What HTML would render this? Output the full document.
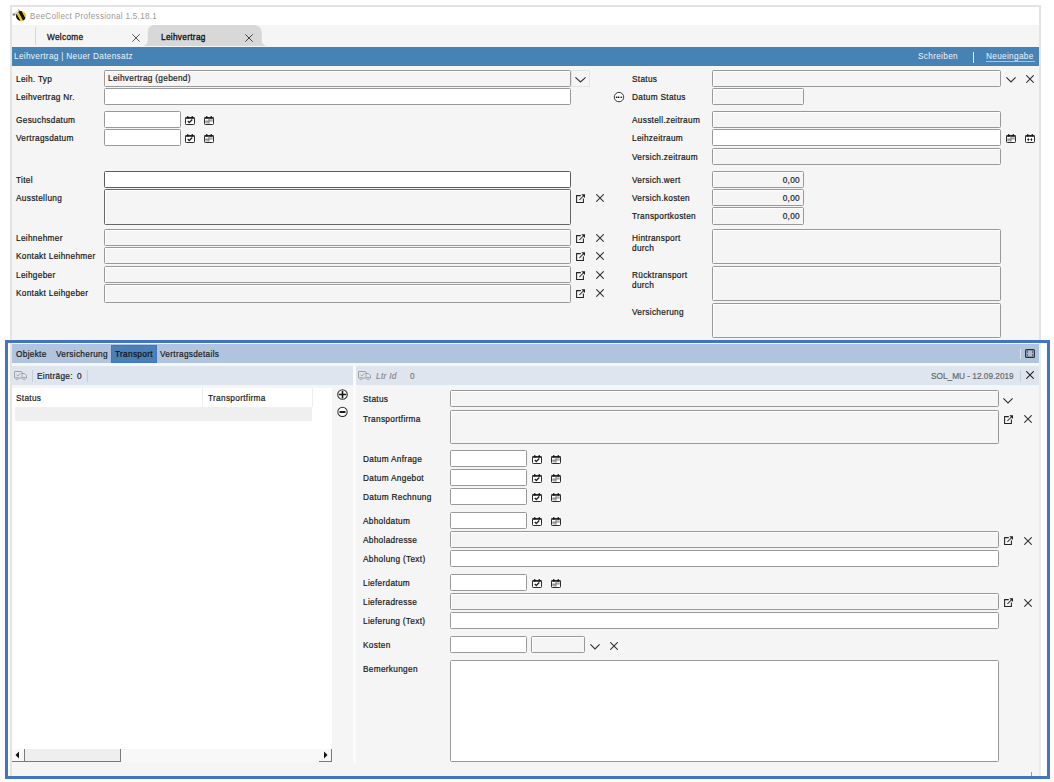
<!DOCTYPE html><html><head><meta charset="utf-8"><title>BeeCollect</title><style>
html,body{margin:0;padding:0;width:1054px;height:782px;overflow:hidden;background:#fff;position:relative;font-family:"Liberation Sans",sans-serif;}
body>div{position:absolute;box-sizing:content-box;}
.t{position:absolute;white-space:nowrap;line-height:1.15;color:#161616;font-family:"Liberation Sans",sans-serif;letter-spacing:0.35px;-webkit-text-stroke:0.22px currentColor;transform:scaleX(0.87);transform-origin:0 0;}
</style></head><body>
<div style="left:10px;top:5px;width:1031px;height:772px;background:#e3e3e3;"></div>
<div style="left:12px;top:7px;width:1027px;height:18px;background:#fff;"></div>
<div style="left:12px;top:25px;width:1027px;height:22px;background:#f5f5f5;"></div>
<div style="left:12px;top:47px;width:1027px;height:19px;background:#4682b4;"></div>
<div style="left:12px;top:66px;width:1027px;height:710px;background:#f5f5f5;"></div>
<svg style="position:absolute;left:11px;top:6px;" width="20" height="18" viewBox="0 0 20 18"><defs><clipPath id="bc"><circle cx="10" cy="10" r="5"/></clipPath></defs><ellipse cx="3" cy="8.5" rx="1.6" ry="1.3" fill="#888"/><path d="M4 7Q6 5.5 8 6" stroke="#bbb" stroke-width="0.8" fill="none"/><path d="M7.5 3.5L9 6" stroke="#555" stroke-width="0.9"/><g clip-path="url(#bc)" transform="rotate(-28 10 10)"><rect x="4" y="3" width="3.4" height="14" fill="#111"/><rect x="7.4" y="3" width="2.2" height="14" fill="#f4c300"/><rect x="9.6" y="3" width="3.4" height="14" fill="#111"/><rect x="13" y="3" width="4" height="14" fill="#f4c300"/></g></svg>
<div class="t" style="left:30px;top:11px;font-size:9.3px;color:#999;-webkit-text-stroke:0;">BeeCollect Professional 1.5.18.1</div>
<div style="left:35px;top:27px;width:1px;height:18px;background:#d6d6d6;"></div>
<div class="t" style="left:47px;top:32px;font-size:9.5px;color:#222;-webkit-text-stroke:0.35px #222;">Welcome</div>
<svg style="position:absolute;left:132px;top:34px;" width="8" height="8" viewBox="0 0 8 8"><path d="M0.3 0.3L7.7 7.7M7.7 0.3L0.3 7.7" stroke="#555" stroke-width="1.0" fill="none"/></svg>
<svg style="position:absolute;left:141px;top:25px;" width="128" height="21" viewBox="0 0 128 21"><path d="M0 21C4 21 6.8 19 6.8 15V8C6.8 3 9 0 13.5 0H112C117 0 120.8 3 120.8 8V15C120.8 19 123.5 21 128 21Z" fill="#d8d8d8"/></svg>
<div class="t" style="left:161px;top:32px;font-size:9.5px;color:#111;-webkit-text-stroke:0.35px #111;">Leihvertrag</div>
<svg style="position:absolute;left:245px;top:34px;" width="8" height="8" viewBox="0 0 8 8"><path d="M0.3 0.3L7.7 7.7M7.7 0.3L0.3 7.7" stroke="#444" stroke-width="1.0" fill="none"/></svg>
<div class="t" style="left:14px;top:51px;font-size:9.5px;color:#eef4fa;-webkit-text-stroke:0;">Leihvertrag | Neuer Datensatz</div>
<div class="t" style="left:918px;top:51px;font-size:9.5px;color:#eef4fa;-webkit-text-stroke:0;">Schreiben</div>
<div style="left:973px;top:52px;width:1px;height:11px;background:#e6eef6;"></div>
<div class="t" style="left:986px;top:51px;font-size:9.5px;color:#eef4fa;-webkit-text-stroke:0;">Neueingabe</div>
<div style="left:986px;top:61px;width:49px;height:1px;background:#a9c3df;"></div>
<div class="t" style="left:16px;top:74px;font-size:9.5px;">Leih. Typ</div>
<div style="left:104px;top:70px;width:465px;height:15px;border:1px solid #999;border-radius:1.5px;background:#f5f5f5;box-shadow:inset 1px 1px 0 #fff;"></div>
<div class="t" style="left:108px;top:73px;font-size:9.5px;color:#1b1b1b;">Leihvertrag (gebend)</div>
<div style="left:571px;top:70px;width:17px;height:15px;border:1px solid #e4e4e4;"></div>
<svg style="position:absolute;left:575px;top:77px;" width="11" height="6" viewBox="0 0 11 6"><path d="M0.4 0.4L5.5 5L10.6 0.4" stroke="#333" stroke-width="1.15" fill="none"/></svg>
<div class="t" style="left:16px;top:92px;font-size:9.5px;">Leihvertrag Nr.</div>
<div style="left:104px;top:88px;width:465px;height:15px;border:1px solid #999;border-radius:1.5px;background:#fff;box-shadow:inset 1px 1px 0 #fff;"></div>
<div class="t" style="left:16px;top:115px;font-size:9.5px;">Gesuchsdatum</div>
<div style="left:104px;top:111px;width:75px;height:15px;border:1px solid #999;border-radius:1.5px;background:#fff;box-shadow:inset 1px 1px 0 #fff;"></div>
<svg style="position:absolute;left:185px;top:116px;" width="10" height="9" viewBox="0 0 10 9"><rect x="0.5" y="1.5" width="9" height="7" rx="0.8" fill="#fff" stroke="#2a2a2a" stroke-width="1"/><rect x="0.5" y="1.2" width="9" height="1.6" fill="#2a2a2a"/><rect x="2.1" y="0" width="1.3" height="2.6" rx="0.5" fill="#111"/><rect x="6.6" y="0" width="1.3" height="2.6" rx="0.5" fill="#111"/><path d="M2.7 5.1L4.3 6.5L7.3 3.6" stroke="#222" stroke-width="1.35" fill="none"/></svg>
<svg style="position:absolute;left:204px;top:116px;" width="10" height="9" viewBox="0 0 10 9"><rect x="0.5" y="1.5" width="9" height="7" rx="0.8" fill="#fff" stroke="#2a2a2a" stroke-width="1"/><rect x="0.5" y="1.2" width="9" height="1.6" fill="#2a2a2a"/><rect x="2.1" y="0" width="1.3" height="2.6" rx="0.5" fill="#111"/><rect x="6.6" y="0" width="1.3" height="2.6" rx="0.5" fill="#111"/><rect x="1.3" y="3" width="3.2" height="2" fill="#fff"/><rect x="4.5" y="3" width="4.2" height="2" fill="#c8c8c8"/><rect x="1.3" y="5" width="4" height="2.4" fill="#aaa"/><rect x="5.3" y="5" width="3.4" height="2.4" fill="#fff"/><path d="M1.3 5H8.7M5 3V7.6" stroke="#777" stroke-width="0.8"/></svg>
<div class="t" style="left:16px;top:133px;font-size:9.5px;">Vertragsdatum</div>
<div style="left:104px;top:129px;width:75px;height:15px;border:1px solid #999;border-radius:1.5px;background:#fff;box-shadow:inset 1px 1px 0 #fff;"></div>
<svg style="position:absolute;left:185px;top:134px;" width="10" height="9" viewBox="0 0 10 9"><rect x="0.5" y="1.5" width="9" height="7" rx="0.8" fill="#fff" stroke="#2a2a2a" stroke-width="1"/><rect x="0.5" y="1.2" width="9" height="1.6" fill="#2a2a2a"/><rect x="2.1" y="0" width="1.3" height="2.6" rx="0.5" fill="#111"/><rect x="6.6" y="0" width="1.3" height="2.6" rx="0.5" fill="#111"/><path d="M2.7 5.1L4.3 6.5L7.3 3.6" stroke="#222" stroke-width="1.35" fill="none"/></svg>
<svg style="position:absolute;left:204px;top:134px;" width="10" height="9" viewBox="0 0 10 9"><rect x="0.5" y="1.5" width="9" height="7" rx="0.8" fill="#fff" stroke="#2a2a2a" stroke-width="1"/><rect x="0.5" y="1.2" width="9" height="1.6" fill="#2a2a2a"/><rect x="2.1" y="0" width="1.3" height="2.6" rx="0.5" fill="#111"/><rect x="6.6" y="0" width="1.3" height="2.6" rx="0.5" fill="#111"/><rect x="1.3" y="3" width="3.2" height="2" fill="#fff"/><rect x="4.5" y="3" width="4.2" height="2" fill="#c8c8c8"/><rect x="1.3" y="5" width="4" height="2.4" fill="#aaa"/><rect x="5.3" y="5" width="3.4" height="2.4" fill="#fff"/><path d="M1.3 5H8.7M5 3V7.6" stroke="#777" stroke-width="0.8"/></svg>
<div class="t" style="left:16px;top:175px;font-size:9.5px;">Titel</div>
<div style="left:104px;top:171px;width:465px;height:15px;border:1px solid #5c5c5c;border-radius:1.5px;background:#fff;"></div>
<div class="t" style="left:16px;top:193px;font-size:9.5px;">Ausstellung</div>
<div style="left:104px;top:189px;width:465px;height:34px;border:1px solid #666;border-radius:1.5px;background:#f5f5f5;box-shadow:inset 1px 1px 0 #fff;"></div>
<svg style="position:absolute;left:575px;top:193px;" width="11" height="11" viewBox="0 0 11 11"><path d="M5.8 2.6H1.6V9.4H8.4V5.4" stroke="#222" stroke-width="1.05" fill="none"/><path d="M4.4 7L8.4 3" stroke="#222" stroke-width="1.05"/><path d="M6.3 1.3H10V5Z" fill="#222"/></svg>
<svg style="position:absolute;left:596px;top:194px;" width="8" height="8" viewBox="0 0 8 8"><path d="M0.3 0.3L7.7 7.7M7.7 0.3L0.3 7.7" stroke="#333" stroke-width="1.1" fill="none"/></svg>
<div class="t" style="left:16px;top:233px;font-size:9.5px;">Leihnehmer</div>
<div style="left:104px;top:229px;width:465px;height:15px;border:1px solid #999;border-radius:1.5px;background:#f5f5f5;box-shadow:inset 1px 1px 0 #fff;"></div>
<svg style="position:absolute;left:575px;top:233px;" width="11" height="11" viewBox="0 0 11 11"><path d="M5.8 2.6H1.6V9.4H8.4V5.4" stroke="#222" stroke-width="1.05" fill="none"/><path d="M4.4 7L8.4 3" stroke="#222" stroke-width="1.05"/><path d="M6.3 1.3H10V5Z" fill="#222"/></svg>
<svg style="position:absolute;left:596px;top:234px;" width="8" height="8" viewBox="0 0 8 8"><path d="M0.3 0.3L7.7 7.7M7.7 0.3L0.3 7.7" stroke="#333" stroke-width="1.1" fill="none"/></svg>
<div class="t" style="left:16px;top:251px;font-size:9.5px;">Kontakt Leihnehmer</div>
<div style="left:104px;top:247px;width:465px;height:15px;border:1px solid #999;border-radius:1.5px;background:#f5f5f5;box-shadow:inset 1px 1px 0 #fff;"></div>
<svg style="position:absolute;left:575px;top:251px;" width="11" height="11" viewBox="0 0 11 11"><path d="M5.8 2.6H1.6V9.4H8.4V5.4" stroke="#222" stroke-width="1.05" fill="none"/><path d="M4.4 7L8.4 3" stroke="#222" stroke-width="1.05"/><path d="M6.3 1.3H10V5Z" fill="#222"/></svg>
<svg style="position:absolute;left:596px;top:252px;" width="8" height="8" viewBox="0 0 8 8"><path d="M0.3 0.3L7.7 7.7M7.7 0.3L0.3 7.7" stroke="#333" stroke-width="1.1" fill="none"/></svg>
<div class="t" style="left:16px;top:270px;font-size:9.5px;">Leihgeber</div>
<div style="left:104px;top:266px;width:465px;height:15px;border:1px solid #999;border-radius:1.5px;background:#f5f5f5;box-shadow:inset 1px 1px 0 #fff;"></div>
<svg style="position:absolute;left:575px;top:270px;" width="11" height="11" viewBox="0 0 11 11"><path d="M5.8 2.6H1.6V9.4H8.4V5.4" stroke="#222" stroke-width="1.05" fill="none"/><path d="M4.4 7L8.4 3" stroke="#222" stroke-width="1.05"/><path d="M6.3 1.3H10V5Z" fill="#222"/></svg>
<svg style="position:absolute;left:596px;top:271px;" width="8" height="8" viewBox="0 0 8 8"><path d="M0.3 0.3L7.7 7.7M7.7 0.3L0.3 7.7" stroke="#333" stroke-width="1.1" fill="none"/></svg>
<div class="t" style="left:16px;top:288px;font-size:9.5px;">Kontakt Leihgeber</div>
<div style="left:104px;top:284px;width:465px;height:17px;border:1px solid #999;border-radius:1.5px;background:#f5f5f5;box-shadow:inset 1px 1px 0 #fff;"></div>
<svg style="position:absolute;left:575px;top:288px;" width="11" height="11" viewBox="0 0 11 11"><path d="M5.8 2.6H1.6V9.4H8.4V5.4" stroke="#222" stroke-width="1.05" fill="none"/><path d="M4.4 7L8.4 3" stroke="#222" stroke-width="1.05"/><path d="M6.3 1.3H10V5Z" fill="#222"/></svg>
<svg style="position:absolute;left:596px;top:289px;" width="8" height="8" viewBox="0 0 8 8"><path d="M0.3 0.3L7.7 7.7M7.7 0.3L0.3 7.7" stroke="#333" stroke-width="1.1" fill="none"/></svg>
<div class="t" style="left:632px;top:74px;font-size:9.5px;">Status</div>
<div style="left:712px;top:70px;width:287px;height:15px;border:1px solid #999;border-radius:1.5px;background:#f5f5f5;box-shadow:inset 1px 1px 0 #fff;"></div>
<svg style="position:absolute;left:1006px;top:77px;" width="10" height="6" viewBox="0 0 10 6"><path d="M0.4 0.4L5.0 5L9.6 0.4" stroke="#333" stroke-width="1.15" fill="none"/></svg>
<svg style="position:absolute;left:1026px;top:75px;" width="8" height="8" viewBox="0 0 8 8"><path d="M0.3 0.3L7.7 7.7M7.7 0.3L0.3 7.7" stroke="#333" stroke-width="1.1" fill="none"/></svg>
<svg style="position:absolute;left:613px;top:91px;" width="12" height="12" viewBox="0 0 12 12"><circle cx="6" cy="6.1" r="4.7" fill="#fff" stroke="#3a3a3a" stroke-width="1"/><path d="M3.5 6.3H8.4" stroke="#666" stroke-width="0.6"/><circle cx="3.5" cy="6.3" r="0.8" fill="#000"/><circle cx="5.5" cy="6.3" r="0.8" fill="#000"/><circle cx="8.4" cy="6.3" r="0.8" fill="#000"/></svg>
<div class="t" style="left:632px;top:92px;font-size:9.5px;">Datum Status</div>
<div style="left:712px;top:88px;width:90px;height:15px;border:1px solid #999;border-radius:1.5px;background:#f5f5f5;box-shadow:inset 1px 1px 0 #fff;"></div>
<div class="t" style="left:632px;top:115px;font-size:9.5px;">Ausstell.zeitraum</div>
<div style="left:712px;top:111px;width:287px;height:15px;border:1px solid #999;border-radius:1.5px;background:#f5f5f5;box-shadow:inset 1px 1px 0 #fff;"></div>
<div class="t" style="left:632px;top:133px;font-size:9.5px;">Leihzeitraum</div>
<div style="left:712px;top:129px;width:287px;height:15px;border:1px solid #999;border-radius:1.5px;background:#fff;"></div>
<svg style="position:absolute;left:1006px;top:134px;" width="10" height="9" viewBox="0 0 10 9"><rect x="0.5" y="1.5" width="9" height="7" rx="0.8" fill="#fff" stroke="#2a2a2a" stroke-width="1"/><rect x="0.5" y="1.2" width="9" height="1.6" fill="#2a2a2a"/><rect x="2.1" y="0" width="1.3" height="2.6" rx="0.5" fill="#111"/><rect x="6.6" y="0" width="1.3" height="2.6" rx="0.5" fill="#111"/><rect x="1.3" y="3" width="3.2" height="2" fill="#fff"/><rect x="4.5" y="3" width="4.2" height="2" fill="#c8c8c8"/><rect x="1.3" y="5" width="4" height="2.4" fill="#aaa"/><rect x="5.3" y="5" width="3.4" height="2.4" fill="#fff"/><path d="M1.3 5H8.7M5 3V7.6" stroke="#777" stroke-width="0.8"/></svg>
<svg style="position:absolute;left:1025px;top:134px;" width="10" height="9" viewBox="0 0 10 9"><rect x="0.5" y="1.5" width="9" height="7" rx="0.8" fill="#fff" stroke="#2a2a2a" stroke-width="1"/><rect x="0.5" y="1.2" width="9" height="1.6" fill="#2a2a2a"/><rect x="2.1" y="0" width="1.3" height="2.6" rx="0.5" fill="#111"/><rect x="6.6" y="0" width="1.3" height="2.6" rx="0.5" fill="#111"/><path d="M2.2 5.6L3.2 4L4.2 5.6L3.2 7.2ZM5.4 5.6L6.4 4L7.4 5.6L6.4 7.2Z" fill="#111"/><path d="M4 5.6H5.6" stroke="#999" stroke-width="0.8"/></svg>
<div class="t" style="left:632px;top:152px;font-size:9.5px;">Versich.zeitraum</div>
<div style="left:712px;top:148px;width:287px;height:15px;border:1px solid #999;border-radius:1.5px;background:#f5f5f5;box-shadow:inset 1px 1px 0 #fff;"></div>
<div class="t" style="left:632px;top:175px;font-size:9.5px;">Versich.wert</div>
<div style="left:712px;top:171px;width:90px;height:15px;border:1px solid #999;border-radius:1.5px;background:#f5f5f5;box-shadow:inset 1px 1px 0 #fff;"></div>
<div class="t" style="left:712px;top:175px;width:88px;text-align:right;font-size:9.5px;color:#1b1b1b;transform-origin:100% 0;">0,00</div>
<div class="t" style="left:632px;top:193px;font-size:9.5px;">Versich.kosten</div>
<div style="left:712px;top:189px;width:90px;height:15px;border:1px solid #999;border-radius:1.5px;background:#f5f5f5;box-shadow:inset 1px 1px 0 #fff;"></div>
<div class="t" style="left:712px;top:193px;width:88px;text-align:right;font-size:9.5px;color:#1b1b1b;transform-origin:100% 0;">0,00</div>
<div class="t" style="left:632px;top:211px;font-size:9.5px;">Transportkosten</div>
<div style="left:712px;top:207px;width:90px;height:16px;border:1px solid #999;border-radius:1.5px;background:#f5f5f5;box-shadow:inset 1px 1px 0 #fff;"></div>
<div class="t" style="left:712px;top:211px;width:88px;text-align:right;font-size:9.5px;color:#1b1b1b;transform-origin:100% 0;">0,00</div>
<div class="t" style="left:632px;top:233px;font-size:9.5px;">Hintransport</div>
<div class="t" style="left:632px;top:243px;font-size:9.5px;">durch</div>
<div style="left:712px;top:229px;width:287px;height:33px;border:1px solid #999;border-radius:1.5px;background:#f5f5f5;box-shadow:inset 1px 1px 0 #fff;"></div>
<div class="t" style="left:632px;top:270px;font-size:9.5px;">Rücktransport</div>
<div class="t" style="left:632px;top:280px;font-size:9.5px;">durch</div>
<div style="left:712px;top:266px;width:287px;height:33px;border:1px solid #999;border-radius:1.5px;background:#f5f5f5;box-shadow:inset 1px 1px 0 #fff;"></div>
<div class="t" style="left:632px;top:307px;font-size:9.5px;">Versicherung</div>
<div style="left:712px;top:303px;width:287px;height:33px;border:1px solid #999;border-radius:1.5px;background:#f5f5f5;box-shadow:inset 1px 1px 0 #fff;"></div>
<div style="left:5px;top:340px;width:1045px;height:439px;background:#fff;"></div>
<div style="left:10px;top:343px;width:2px;height:433px;background:#e3e3e3;"></div>
<div style="left:1039px;top:343px;width:2px;height:433px;background:#ececec;"></div>
<div style="left:12px;top:343px;width:1027px;height:1px;background:#f8f8f8;"></div>
<div style="left:12px;top:344px;width:1027px;height:19px;background:#b0c4de;"></div>
<div style="left:12px;top:363px;width:1027px;height:3px;background:#f6f6f6;"></div>
<div class="t" style="left:16px;top:349px;font-size:9.5px;color:#1b1b1b;">Objekte</div>
<div class="t" style="left:56px;top:349px;font-size:9.5px;color:#1b1b1b;">Versicherung</div>
<div style="left:111px;top:345px;width:44px;height:16px;background:#4b80b7;border:1px solid #3b78c2;"></div>
<div class="t" style="left:115px;top:349px;font-size:9.5px;color:#111;">Transport</div>
<div class="t" style="left:160px;top:349px;font-size:9.5px;color:#1b1b1b;">Vertragsdetails</div>
<div style="left:1020px;top:349px;width:1px;height:10px;background:#e2e2dc;"></div>
<svg style="position:absolute;left:1025px;top:349px;" width="10" height="9" viewBox="0 0 10 9"><rect x="0.6" y="0.6" width="8.8" height="7.8" rx="1" fill="#a9bdd8" stroke="#2a2a2a" stroke-width="1.1"/><path d="M2.3 1.6V4M2.3 4.9V7.3M7.7 1.6V4M7.7 4.9V7.3" stroke="#556" stroke-width="1"/></svg>
<div style="left:12px;top:366px;width:341px;height:19px;background:#dee5ef;"></div>
<svg style="position:absolute;left:14px;top:371px;" width="13" height="9" viewBox="0 0 13 9"><rect x="0.5" y="0.5" width="7.5" height="6.5" rx="0.5" fill="none" stroke="#a0a0a0" stroke-width="1"/><path d="M8 2.5H10.5L12.5 4.5V7H8" fill="none" stroke="#a0a0a0" stroke-width="1"/><circle cx="3" cy="7.5" r="1.2" fill="#dee5ef" stroke="#a0a0a0" stroke-width="0.9"/><circle cx="10" cy="7.5" r="1.2" fill="#dee5ef" stroke="#a0a0a0" stroke-width="0.9"/><path d="M2.5 3.5L4 5L6.5 2" stroke="#a0a0a0" stroke-width="0.9" fill="none"/></svg>
<div style="left:32px;top:370px;width:1px;height:12px;background:#c4ccd6;"></div>
<div class="t" style="left:37px;top:371px;font-size:9.5px;color:#1b1b1b;">Einträge:</div>
<div class="t" style="left:77px;top:371px;font-size:9.5px;color:#1b1b1b;">0</div>
<div style="left:87px;top:370px;width:1px;height:12px;background:#c4ccd6;"></div>
<div style="left:353px;top:366px;width:3px;height:398px;background:#fbfbfb;"></div>
<div style="left:353px;top:764px;width:3px;height:12px;background:#f5f5f5;"></div>
<div style="left:356px;top:366px;width:683px;height:19px;background:#dee5ef;"></div>
<svg style="position:absolute;left:358px;top:371px;" width="13" height="9" viewBox="0 0 13 9"><rect x="0.5" y="0.5" width="7.5" height="6.5" rx="0.5" fill="none" stroke="#a0a0a0" stroke-width="1"/><path d="M8 2.5H10.5L12.5 4.5V7H8" fill="none" stroke="#a0a0a0" stroke-width="1"/><circle cx="3" cy="7.5" r="1.2" fill="#dee5ef" stroke="#a0a0a0" stroke-width="0.9"/><circle cx="10" cy="7.5" r="1.2" fill="#dee5ef" stroke="#a0a0a0" stroke-width="0.9"/><path d="M2.5 3.5L4 5L6.5 2" stroke="#a0a0a0" stroke-width="0.9" fill="none"/></svg>
<div class="t" style="left:376px;top:371px;font-size:9.5px;color:#8a8a8a;font-style:italic;">Ltr Id</div>
<div class="t" style="left:410px;top:371px;font-size:9.5px;color:#7a7a7a;">0</div>
<div class="t" style="left:931px;top:371px;font-size:9.5px;color:#6a6a6a;letter-spacing:0px;">SOL_MU - 12.09.2019</div>
<div style="left:1020px;top:370px;width:1px;height:12px;background:#c4ccd6;"></div>
<svg style="position:absolute;left:1026px;top:371px;" width="8" height="8" viewBox="0 0 8 8"><path d="M0.3 0.3L7.7 7.7M7.7 0.3L0.3 7.7" stroke="#222" stroke-width="1.1" fill="none"/></svg>
<div style="left:12px;top:385px;width:320px;height:364px;background:#fff;"></div>
<div style="left:12px;top:385px;width:341px;height:3px;background:#f5f5f5;"></div>
<div style="left:202px;top:388px;width:1px;height:19px;background:#eeeeee;"></div>
<div style="left:312px;top:388px;width:1px;height:19px;background:#eeeeee;"></div>
<div class="t" style="left:16px;top:393px;font-size:9.5px;color:#1b1b1b;">Status</div>
<div class="t" style="left:208px;top:393px;font-size:9.5px;color:#1b1b1b;">Transportfirma</div>
<div style="left:15px;top:407px;width:297px;height:14px;background:#efefef;"></div>
<div style="left:332px;top:385px;width:21px;height:391px;background:#f5f5f5;"></div>
<svg style="position:absolute;left:337px;top:389px;" width="11" height="11" viewBox="0 0 11 11"><circle cx="5.5" cy="5.5" r="4.8" fill="#fff" stroke="#333" stroke-width="1.05"/><path d="M1.8 5.5H9.2M5.5 1.8V9.2" stroke="#111" stroke-width="1.6"/></svg>
<svg style="position:absolute;left:337px;top:406px;" width="11" height="11" viewBox="0 0 11 11"><circle cx="5.5" cy="5.9" r="4.7" fill="#fff" stroke="#333" stroke-width="1.05"/><path d="M2.5 6H8.5" stroke="#111" stroke-width="1.9"/></svg>
<div style="left:12px;top:749px;width:320px;height:13px;background:#f8f8f8;"></div>
<div style="left:25px;top:749px;width:95px;height:12px;background:#efefef;"></div>
<div style="left:12px;top:761px;width:109px;height:1px;background:#7a7a7a;"></div>
<div style="left:24px;top:749px;width:1px;height:12px;background:#7a7a7a;"></div>
<div style="left:120px;top:749px;width:1px;height:13px;background:#7a7a7a;"></div>
<svg style="position:absolute;left:15px;top:751px;" width="5" height="8" viewBox="0 0 5 8"><path d="M4 0.5V7.5L0.5 4Z" fill="#111"/></svg>
<div style="left:319px;top:761px;width:13px;height:1px;background:#7a7a7a;"></div>
<div style="left:331px;top:749px;width:1px;height:13px;background:#7a7a7a;"></div>
<svg style="position:absolute;left:323px;top:751px;" width="5" height="8" viewBox="0 0 5 8"><path d="M1 0.5V7.5L4.5 4Z" fill="#111"/></svg>
<div style="left:12px;top:762px;width:320px;height:14px;background:#f5f5f5;"></div>
<div style="left:356px;top:385px;width:683px;height:391px;background:#f5f5f5;"></div>
<div class="t" style="left:363px;top:394px;font-size:9.5px;">Status</div>
<div style="left:450px;top:390px;width:547px;height:15px;border:1px solid #999;border-radius:1.5px;background:#f5f5f5;box-shadow:inset 1px 1px 0 #fff;"></div>
<svg style="position:absolute;left:1003px;top:398px;" width="10" height="6" viewBox="0 0 10 6"><path d="M0.4 0.4L5.0 5L9.6 0.4" stroke="#333" stroke-width="1.15" fill="none"/></svg>
<div class="t" style="left:363px;top:414px;font-size:9.5px;">Transportfirma</div>
<div style="left:450px;top:410px;width:547px;height:32px;border:1px solid #999;border-radius:1.5px;background:#f5f5f5;box-shadow:inset 1px 1px 0 #fff;"></div>
<svg style="position:absolute;left:1003px;top:414px;" width="11" height="11" viewBox="0 0 11 11"><path d="M5.8 2.6H1.6V9.4H8.4V5.4" stroke="#222" stroke-width="1.05" fill="none"/><path d="M4.4 7L8.4 3" stroke="#222" stroke-width="1.05"/><path d="M6.3 1.3H10V5Z" fill="#222"/></svg>
<svg style="position:absolute;left:1024px;top:415px;" width="8" height="8" viewBox="0 0 8 8"><path d="M0.3 0.3L7.7 7.7M7.7 0.3L0.3 7.7" stroke="#333" stroke-width="1.1" fill="none"/></svg>
<div class="t" style="left:363px;top:454px;font-size:9.5px;">Datum Anfrage</div>
<div style="left:450px;top:450px;width:75px;height:15px;border:1px solid #999;border-radius:1.5px;background:#fff;"></div>
<svg style="position:absolute;left:532px;top:455px;" width="10" height="9" viewBox="0 0 10 9"><rect x="0.5" y="1.5" width="9" height="7" rx="0.8" fill="#fff" stroke="#2a2a2a" stroke-width="1"/><rect x="0.5" y="1.2" width="9" height="1.6" fill="#2a2a2a"/><rect x="2.1" y="0" width="1.3" height="2.6" rx="0.5" fill="#111"/><rect x="6.6" y="0" width="1.3" height="2.6" rx="0.5" fill="#111"/><path d="M2.7 5.1L4.3 6.5L7.3 3.6" stroke="#222" stroke-width="1.35" fill="none"/></svg>
<svg style="position:absolute;left:551px;top:455px;" width="10" height="9" viewBox="0 0 10 9"><rect x="0.5" y="1.5" width="9" height="7" rx="0.8" fill="#fff" stroke="#2a2a2a" stroke-width="1"/><rect x="0.5" y="1.2" width="9" height="1.6" fill="#2a2a2a"/><rect x="2.1" y="0" width="1.3" height="2.6" rx="0.5" fill="#111"/><rect x="6.6" y="0" width="1.3" height="2.6" rx="0.5" fill="#111"/><rect x="1.3" y="3" width="3.2" height="2" fill="#fff"/><rect x="4.5" y="3" width="4.2" height="2" fill="#c8c8c8"/><rect x="1.3" y="5" width="4" height="2.4" fill="#aaa"/><rect x="5.3" y="5" width="3.4" height="2.4" fill="#fff"/><path d="M1.3 5H8.7M5 3V7.6" stroke="#777" stroke-width="0.8"/></svg>
<div class="t" style="left:363px;top:473px;font-size:9.5px;">Datum Angebot</div>
<div style="left:450px;top:469px;width:75px;height:15px;border:1px solid #999;border-radius:1.5px;background:#fff;"></div>
<svg style="position:absolute;left:532px;top:474px;" width="10" height="9" viewBox="0 0 10 9"><rect x="0.5" y="1.5" width="9" height="7" rx="0.8" fill="#fff" stroke="#2a2a2a" stroke-width="1"/><rect x="0.5" y="1.2" width="9" height="1.6" fill="#2a2a2a"/><rect x="2.1" y="0" width="1.3" height="2.6" rx="0.5" fill="#111"/><rect x="6.6" y="0" width="1.3" height="2.6" rx="0.5" fill="#111"/><path d="M2.7 5.1L4.3 6.5L7.3 3.6" stroke="#222" stroke-width="1.35" fill="none"/></svg>
<svg style="position:absolute;left:551px;top:474px;" width="10" height="9" viewBox="0 0 10 9"><rect x="0.5" y="1.5" width="9" height="7" rx="0.8" fill="#fff" stroke="#2a2a2a" stroke-width="1"/><rect x="0.5" y="1.2" width="9" height="1.6" fill="#2a2a2a"/><rect x="2.1" y="0" width="1.3" height="2.6" rx="0.5" fill="#111"/><rect x="6.6" y="0" width="1.3" height="2.6" rx="0.5" fill="#111"/><rect x="1.3" y="3" width="3.2" height="2" fill="#fff"/><rect x="4.5" y="3" width="4.2" height="2" fill="#c8c8c8"/><rect x="1.3" y="5" width="4" height="2.4" fill="#aaa"/><rect x="5.3" y="5" width="3.4" height="2.4" fill="#fff"/><path d="M1.3 5H8.7M5 3V7.6" stroke="#777" stroke-width="0.8"/></svg>
<div class="t" style="left:363px;top:492px;font-size:9.5px;">Datum Rechnung</div>
<div style="left:450px;top:488px;width:75px;height:15px;border:1px solid #999;border-radius:1.5px;background:#fff;"></div>
<svg style="position:absolute;left:532px;top:493px;" width="10" height="9" viewBox="0 0 10 9"><rect x="0.5" y="1.5" width="9" height="7" rx="0.8" fill="#fff" stroke="#2a2a2a" stroke-width="1"/><rect x="0.5" y="1.2" width="9" height="1.6" fill="#2a2a2a"/><rect x="2.1" y="0" width="1.3" height="2.6" rx="0.5" fill="#111"/><rect x="6.6" y="0" width="1.3" height="2.6" rx="0.5" fill="#111"/><path d="M2.7 5.1L4.3 6.5L7.3 3.6" stroke="#222" stroke-width="1.35" fill="none"/></svg>
<svg style="position:absolute;left:551px;top:493px;" width="10" height="9" viewBox="0 0 10 9"><rect x="0.5" y="1.5" width="9" height="7" rx="0.8" fill="#fff" stroke="#2a2a2a" stroke-width="1"/><rect x="0.5" y="1.2" width="9" height="1.6" fill="#2a2a2a"/><rect x="2.1" y="0" width="1.3" height="2.6" rx="0.5" fill="#111"/><rect x="6.6" y="0" width="1.3" height="2.6" rx="0.5" fill="#111"/><rect x="1.3" y="3" width="3.2" height="2" fill="#fff"/><rect x="4.5" y="3" width="4.2" height="2" fill="#c8c8c8"/><rect x="1.3" y="5" width="4" height="2.4" fill="#aaa"/><rect x="5.3" y="5" width="3.4" height="2.4" fill="#fff"/><path d="M1.3 5H8.7M5 3V7.6" stroke="#777" stroke-width="0.8"/></svg>
<div class="t" style="left:363px;top:516px;font-size:9.5px;">Abholdatum</div>
<div style="left:450px;top:512px;width:75px;height:15px;border:1px solid #999;border-radius:1.5px;background:#fff;"></div>
<svg style="position:absolute;left:532px;top:517px;" width="10" height="9" viewBox="0 0 10 9"><rect x="0.5" y="1.5" width="9" height="7" rx="0.8" fill="#fff" stroke="#2a2a2a" stroke-width="1"/><rect x="0.5" y="1.2" width="9" height="1.6" fill="#2a2a2a"/><rect x="2.1" y="0" width="1.3" height="2.6" rx="0.5" fill="#111"/><rect x="6.6" y="0" width="1.3" height="2.6" rx="0.5" fill="#111"/><path d="M2.7 5.1L4.3 6.5L7.3 3.6" stroke="#222" stroke-width="1.35" fill="none"/></svg>
<svg style="position:absolute;left:551px;top:517px;" width="10" height="9" viewBox="0 0 10 9"><rect x="0.5" y="1.5" width="9" height="7" rx="0.8" fill="#fff" stroke="#2a2a2a" stroke-width="1"/><rect x="0.5" y="1.2" width="9" height="1.6" fill="#2a2a2a"/><rect x="2.1" y="0" width="1.3" height="2.6" rx="0.5" fill="#111"/><rect x="6.6" y="0" width="1.3" height="2.6" rx="0.5" fill="#111"/><rect x="1.3" y="3" width="3.2" height="2" fill="#fff"/><rect x="4.5" y="3" width="4.2" height="2" fill="#c8c8c8"/><rect x="1.3" y="5" width="4" height="2.4" fill="#aaa"/><rect x="5.3" y="5" width="3.4" height="2.4" fill="#fff"/><path d="M1.3 5H8.7M5 3V7.6" stroke="#777" stroke-width="0.8"/></svg>
<div class="t" style="left:363px;top:578px;font-size:9.5px;">Lieferdatum</div>
<div style="left:450px;top:574px;width:75px;height:15px;border:1px solid #999;border-radius:1.5px;background:#fff;"></div>
<svg style="position:absolute;left:532px;top:579px;" width="10" height="9" viewBox="0 0 10 9"><rect x="0.5" y="1.5" width="9" height="7" rx="0.8" fill="#fff" stroke="#2a2a2a" stroke-width="1"/><rect x="0.5" y="1.2" width="9" height="1.6" fill="#2a2a2a"/><rect x="2.1" y="0" width="1.3" height="2.6" rx="0.5" fill="#111"/><rect x="6.6" y="0" width="1.3" height="2.6" rx="0.5" fill="#111"/><path d="M2.7 5.1L4.3 6.5L7.3 3.6" stroke="#222" stroke-width="1.35" fill="none"/></svg>
<svg style="position:absolute;left:551px;top:579px;" width="10" height="9" viewBox="0 0 10 9"><rect x="0.5" y="1.5" width="9" height="7" rx="0.8" fill="#fff" stroke="#2a2a2a" stroke-width="1"/><rect x="0.5" y="1.2" width="9" height="1.6" fill="#2a2a2a"/><rect x="2.1" y="0" width="1.3" height="2.6" rx="0.5" fill="#111"/><rect x="6.6" y="0" width="1.3" height="2.6" rx="0.5" fill="#111"/><rect x="1.3" y="3" width="3.2" height="2" fill="#fff"/><rect x="4.5" y="3" width="4.2" height="2" fill="#c8c8c8"/><rect x="1.3" y="5" width="4" height="2.4" fill="#aaa"/><rect x="5.3" y="5" width="3.4" height="2.4" fill="#fff"/><path d="M1.3 5H8.7M5 3V7.6" stroke="#777" stroke-width="0.8"/></svg>
<div class="t" style="left:363px;top:535px;font-size:9.5px;">Abholadresse</div>
<div style="left:450px;top:531px;width:547px;height:15px;border:1px solid #999;border-radius:1.5px;background:#f5f5f5;box-shadow:inset 1px 1px 0 #fff;"></div>
<svg style="position:absolute;left:1003px;top:535px;" width="11" height="11" viewBox="0 0 11 11"><path d="M5.8 2.6H1.6V9.4H8.4V5.4" stroke="#222" stroke-width="1.05" fill="none"/><path d="M4.4 7L8.4 3" stroke="#222" stroke-width="1.05"/><path d="M6.3 1.3H10V5Z" fill="#222"/></svg>
<svg style="position:absolute;left:1024px;top:537px;" width="8" height="8" viewBox="0 0 8 8"><path d="M0.3 0.3L7.7 7.7M7.7 0.3L0.3 7.7" stroke="#333" stroke-width="1.1" fill="none"/></svg>
<div class="t" style="left:363px;top:554px;font-size:9.5px;">Abholung (Text)</div>
<div style="left:450px;top:550px;width:547px;height:15px;border:1px solid #999;border-radius:1.5px;background:#fff;"></div>
<div class="t" style="left:363px;top:597px;font-size:9.5px;">Lieferadresse</div>
<div style="left:450px;top:593px;width:547px;height:15px;border:1px solid #999;border-radius:1.5px;background:#f5f5f5;box-shadow:inset 1px 1px 0 #fff;"></div>
<svg style="position:absolute;left:1003px;top:597px;" width="11" height="11" viewBox="0 0 11 11"><path d="M5.8 2.6H1.6V9.4H8.4V5.4" stroke="#222" stroke-width="1.05" fill="none"/><path d="M4.4 7L8.4 3" stroke="#222" stroke-width="1.05"/><path d="M6.3 1.3H10V5Z" fill="#222"/></svg>
<svg style="position:absolute;left:1024px;top:599px;" width="8" height="8" viewBox="0 0 8 8"><path d="M0.3 0.3L7.7 7.7M7.7 0.3L0.3 7.7" stroke="#333" stroke-width="1.1" fill="none"/></svg>
<div class="t" style="left:363px;top:616px;font-size:9.5px;">Lieferung (Text)</div>
<div style="left:450px;top:612px;width:547px;height:15px;border:1px solid #999;border-radius:1.5px;background:#fff;"></div>
<div class="t" style="left:363px;top:640px;font-size:9.5px;">Kosten</div>
<div style="left:450px;top:636px;width:75px;height:15px;border:1px solid #999;border-radius:1.5px;background:#fff;"></div>
<div style="left:531px;top:636px;width:52px;height:15px;border:1px solid #999;border-radius:1.5px;background:#f5f5f5;box-shadow:inset 1px 1px 0 #fff;"></div>
<svg style="position:absolute;left:590px;top:644px;" width="10" height="6" viewBox="0 0 10 6"><path d="M0.4 0.4L5.0 5L9.6 0.4" stroke="#333" stroke-width="1.15" fill="none"/></svg>
<svg style="position:absolute;left:610px;top:642px;" width="8" height="8" viewBox="0 0 8 8"><path d="M0.3 0.3L7.7 7.7M7.7 0.3L0.3 7.7" stroke="#333" stroke-width="1.1" fill="none"/></svg>
<div class="t" style="left:363px;top:664px;font-size:9.5px;">Bemerkungen</div>
<div style="left:450px;top:660px;width:547px;height:100px;border:1px solid #999;border-radius:1.5px;background:#fff;"></div>
<div style="left:1031px;top:772px;width:1px;height:4px;background:#999;"></div>
<div style="left:5px;top:340px;width:1039px;height:433px;border:3px solid #4472c4;"></div>
</body></html>
